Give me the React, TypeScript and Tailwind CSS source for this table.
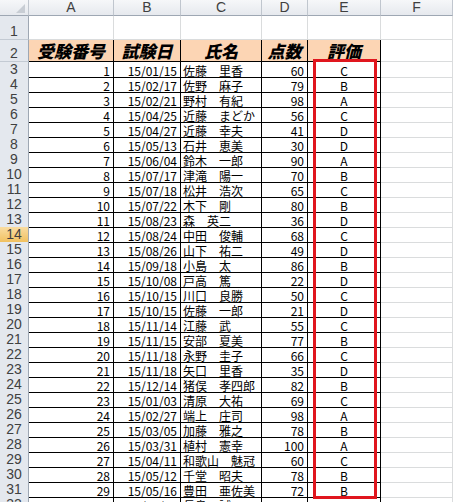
import React from "react";

type Row = [number, string, string, number, string];

const rows: Row[] = [
  [1, "15/01/15", "佐藤　里香", 60, "C"],
  [2, "15/02/17", "佐野　麻子", 79, "B"],
  [3, "15/02/21", "野村　有紀", 98, "A"],
  [4, "15/04/25", "近藤　まどか", 56, "C"],
  [5, "15/04/27", "近藤　幸夫", 41, "D"],
  [6, "15/05/13", "石井　恵美", 30, "D"],
  [7, "15/06/04", "鈴木　一郎", 90, "A"],
  [8, "15/07/17", "津滝　陽一", 70, "B"],
  [9, "15/07/18", "松井　浩次", 65, "C"],
  [10, "15/07/22", "木下　剛", 80, "B"],
  [11, "15/08/23", "森　英二", 36, "D"],
  [12, "15/08/24", "中田　俊輔", 68, "C"],
  [13, "15/08/26", "山下　祐二", 49, "D"],
  [14, "15/09/18", "小島　太", 86, "B"],
  [15, "15/10/08", "戸高　篤", 22, "D"],
  [16, "15/10/15", "川口　良勝", 50, "C"],
  [17, "15/10/15", "佐藤　一郎", 21, "D"],
  [18, "15/11/14", "江藤　武", 55, "C"],
  [19, "15/11/15", "安部　夏美", 77, "B"],
  [20, "15/11/18", "永野　圭子", 66, "C"],
  [21, "15/11/18", "矢口　里香", 35, "D"],
  [22, "15/12/14", "猪俣　孝四郎", 82, "B"],
  [23, "15/01/03", "清原　大祐", 69, "C"],
  [24, "15/02/27", "端上　庄司", 98, "A"],
  [25, "15/03/05", "加藤　雅之", 78, "B"],
  [26, "15/03/31", "植村　憲幸", 100, "A"],
  [27, "15/04/11", "和歌山　魅冠", 60, "C"],
  [28, "15/05/12", "千堂　昭夫", 78, "B"],
  [29, "15/05/16", "豊田　亜佐美", 72, "B"],
  [30, "15/06/21", "長島　誠", 95, "A"],
];

const grid = "grid grid-cols-[29px_85px_67px_81px_46px_73px_1fr]";
const jp = "font-['Noto_Sans_CJK_JP',sans-serif]";
const cell = "border-r border-b border-black flex items-end leading-[13px] text-[12px] text-black whitespace-nowrap";

function RowHead({ n, active }: { n: number; active?: boolean }) {
  return (
    <div
      className={`flex items-end justify-center border-r border-b border-r-[#9EA7B3] border-b-[#C3CAD3] font-['Liberation_Sans',sans-serif] text-[14px] leading-[15px] text-[#404040] ${
        active ? "bg-linear-to-b from-[#F9DCA0] to-[#F1C15F]" : "bg-[#E4E8EE]"
      }`}
    >
      {n}
    </div>
  );
}

export default function App() {
  const letters = ["A", "B", "C", "D", "E", "F"];
  return (
    <div className="relative w-[453px] h-[502px] overflow-hidden bg-white">
      {/* column headers */}
      <div className={`${grid} h-[16px]`}>
        <div className="relative border-r border-b border-r-[#C0C6CE] border-b-[#9EA7B3] bg-linear-to-b from-[#F6F7F9] to-[#E6E9EE]">
          <div className="absolute right-[3px] bottom-[2px] w-0 h-0 border-l-[9px] border-l-transparent border-b-[9px] border-b-[#C8CDD4]" />
        </div>
        {letters.map((l) => (
          <div
            key={l}
            className="flex items-center justify-center border-r border-b border-r-[#C0C6CE] border-b-[#9EA7B3] bg-linear-to-b from-[#F6F7F9] to-[#E6E9EE] font-['Liberation_Sans',sans-serif] text-[14px] leading-[15px] text-[#404040]"
          >
            {l}
          </div>
        ))}
      </div>

      {/* row 1 */}
      <div className={`${grid} h-[24px]`}>
        <RowHead n={1} />
        {letters.map((l) => (
          <div key={l} className="border-r border-b border-[#DADCDD]" />
        ))}
      </div>

      {/* row 2: table header */}
      <div className={`${grid} h-[22px]`}>
        <RowHead n={2} />
        {["受験番号", "試験日", "氏名", "点数", "評価"].map((h) => (
          <div
            key={h}
            className={`flex items-end justify-center border-r border-b border-black bg-[#FCD5B4] ${jp} text-[17px] leading-[20px] font-black italic text-black`}
          >
            {h}
          </div>
        ))}
        <div className="border-r border-b border-[#DADCDD]" />
      </div>

      {/* data rows */}
      {rows.map((r, i) => {
        const n = i + 3;
        return (
          <div key={n} className={`${grid} h-[15px]`}>
            <RowHead n={n} active={n === 14} />
            <div className={`${cell} ${jp} justify-end pr-[3px]`}>{r[0]}</div>
            <div className={`${cell} ${jp} justify-end pr-[3px]`}>{r[1]}</div>
            <div className={`${cell} ${jp} pl-[2px]`}>{r[2]}</div>
            <div className={`${cell} ${jp} justify-end pr-[3px]`}>{r[3]}</div>
            <div className={`${cell} ${jp} justify-center`}>{r[4]}</div>
            <div className="border-r border-b border-[#DADCDD]" />
          </div>
        );
      })}

      {/* red outline drawn over column E */}
      <div className="absolute left-[313px] top-[59px] w-[64px] h-[440px] border-[3px] border-[#E0161E]" />
    </div>
  );
}
